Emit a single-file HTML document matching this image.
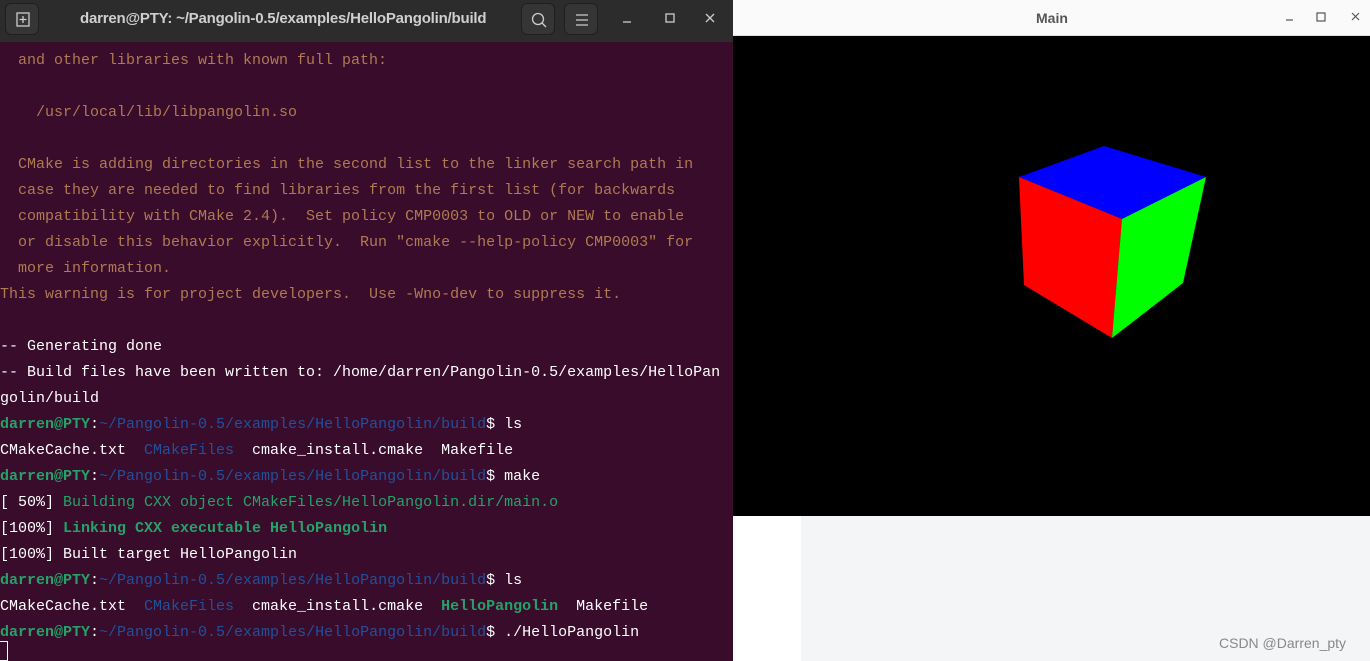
<!DOCTYPE html>
<html><head><meta charset="utf-8"><style>
*{margin:0;padding:0;box-sizing:border-box}
body{width:1370px;height:661px;overflow:hidden;position:relative;background:#f4f5f7;font-family:"Liberation Sans",sans-serif}
#term{position:absolute;left:0;top:0;width:733px;height:661px;background:#380c2a}
#tb{position:absolute;left:0;top:0;width:733px;height:42px;background:#2c2c2c;color:#d6d6d6}
.btn{position:absolute;top:3px;width:34px;height:32px;border-radius:6px;background:#353535;border:1px solid #1f1f1f}
#title{position:absolute;left:80px;top:10px;font-size:15px;font-weight:bold;color:#cfcfcf;letter-spacing:-0.2px}
#lines{position:absolute;left:0;top:48px;font-family:"Liberation Mono",monospace;font-size:15px;line-height:26px;color:#fff;white-space:pre}
.o{color:#b07a52}.g{color:#26a269}.gb{color:#26a269;font-weight:bold}.b{color:#2a5fa8}.bb{color:#23509a}
#main{position:absolute;left:733px;top:0;width:637px;height:516px;background:#000}
#mt{position:absolute;left:0;top:0;width:637px;height:36px;background:#fafafa;border-bottom:1px solid #ddd}
</style></head><body>
<div id="term">
<div id="tb">
<div class="btn" style="left:5px"><svg width="34" height="32"><rect x="11" y="9" width="12" height="13" fill="none" stroke="#ccc" stroke-width="1.3"/><path d="M17 12v7M13.5 15.5h7" stroke="#ccc" stroke-width="1.3"/></svg></div>
<div id="title">darren@PTY: ~/Pangolin-0.5/examples/HelloPangolin/build</div>
<div class="btn" style="left:521px"><svg width="34" height="32"><circle cx="16" cy="15" r="5.5" fill="none" stroke="#ccc" stroke-width="1.3"/><path d="M20 19l4 4" stroke="#ccc" stroke-width="1.3"/></svg></div>
<div class="btn" style="left:564px"><svg width="34" height="32"><path d="M11 11h12M11 16h12M11 21h12" stroke="#ccc" stroke-width="1.3"/></svg></div>
<svg style="position:absolute;left:610px;top:8px" width="120" height="24"><path d="M13 14h8" stroke="#ccc" stroke-width="1.3"/><rect x="56" y="6" width="8" height="8" fill="none" stroke="#ccc" stroke-width="1.3"/><path d="M96 6l8 8M104 6l-8 8" stroke="#ccc" stroke-width="1.3"/></svg>
</div>
<div id="lines"><span class="o">  and other libraries with known full path:

    /usr/local/lib/libpangolin.so

  CMake is adding directories in the second list to the linker search path in
  case they are needed to find libraries from the first list (for backwards
  compatibility with CMake 2.4).  Set policy CMP0003 to OLD or NEW to enable
  or disable this behavior explicitly.  Run "cmake --help-policy CMP0003" for
  more information.
This warning is for project developers.  Use -Wno-dev to suppress it.</span>

-- Generating done
-- Build files have been written to: /home/darren/Pangolin-0.5/examples/HelloPan
golin/build
<span class="gb">darren@PTY</span>:<span class="bb">~/Pangolin-0.5/examples/HelloPangolin/build</span>$ ls
CMakeCache.txt  <span class="bb">CMakeFiles</span>  cmake_install.cmake  Makefile
<span class="gb">darren@PTY</span>:<span class="bb">~/Pangolin-0.5/examples/HelloPangolin/build</span>$ make
[ 50%] <span class="g">Building CXX object CMakeFiles/HelloPangolin.dir/main.o</span>
[100%] <span class="gb">Linking CXX executable HelloPangolin</span>
[100%] Built target HelloPangolin
<span class="gb">darren@PTY</span>:<span class="bb">~/Pangolin-0.5/examples/HelloPangolin/build</span>$ ls
CMakeCache.txt  <span class="bb">CMakeFiles</span>  cmake_install.cmake  <span class="gb">HelloPangolin</span>  Makefile
<span class="gb">darren@PTY</span>:<span class="bb">~/Pangolin-0.5/examples/HelloPangolin/build</span>$ ./HelloPangolin
</div>
<div style="position:absolute;left:0;top:641px;width:8px;height:20px;border:1px solid #fff;border-left:none"></div>
</div>
<div style="position:absolute;left:733px;top:516px;width:68px;height:145px;background:#fff"></div>
<div id="main">
<div id="mt"><div style="position:absolute;left:303px;top:10px;font-size:14px;font-weight:bold;color:#555">Main</div>
<svg style="position:absolute;left:537px;top:8px" width="100" height="20"><path d="M16 12h7" stroke="#555" stroke-width="1.2"/><rect x="47" y="5" width="8" height="8" fill="none" stroke="#555" stroke-width="1.2"/><path d="M82 5l7 7M89 5l-7 7" stroke="#555" stroke-width="1.2"/></svg></div>
<svg style="position:absolute;left:0;top:0" width="637" height="516">
<polygon points="371,146 286,177 389,219 473,177" fill="#0000ff"/>
<polygon points="286,177 389,219 379,338 291,285" fill="#ff0000"/>
<polygon points="389,219 473,177 450,283 379,338" fill="#00ff00"/>
</svg>
</div>
<div style="position:absolute;left:1219px;top:635px;font-size:14px;color:#888">CSDN @Darren_pty</div>
</body></html>
